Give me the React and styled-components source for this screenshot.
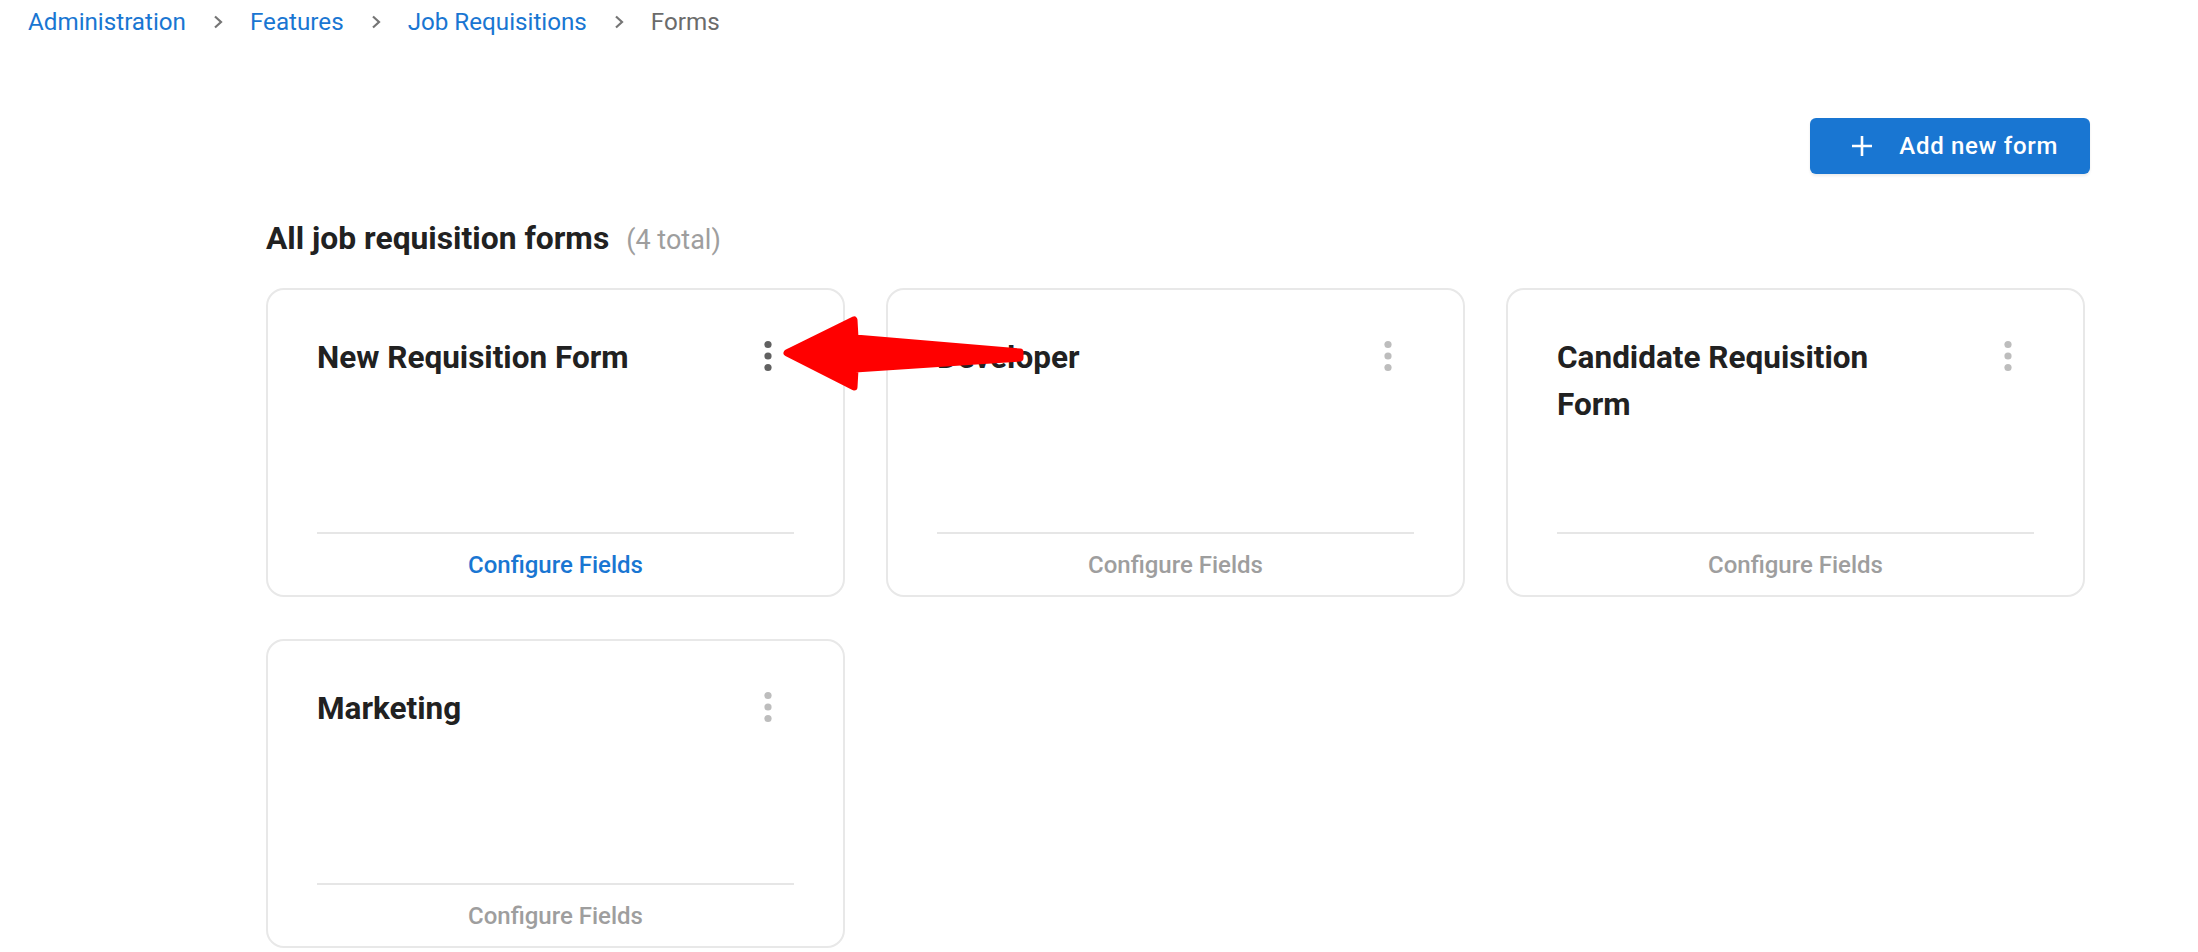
import React from "react";
import styled, { createGlobalStyle } from "styled-components";

const GlobalStyle = createGlobalStyle`
  html, body {
    margin: 0;
    padding: 0;
    background: #ffffff;
  }
  body {
    font-family: Roboto, "Liberation Sans", Arial, sans-serif;
    color: #212121;
  }
`;

const forms = [
  { id: 1, name: "New Requisition Form", active: true },
  { id: 2, name: "Developer" },
  { id: 3, name: "Candidate Requisition Form" },
  { id: 4, name: "Marketing" },
];

const crumbs = ["Administration", "Features", "Job Requisitions"];

function App() {
  return (
    <Page>
      <GlobalStyle />
      <Breadcrumbs>
        {crumbs.map((c) => (
          <React.Fragment key={c}>
            <CrumbLink>{c}</CrumbLink>
            <Separator>
              <svg width="12" height="14" viewBox="0 0 12 14">
                <path d="M3 1.5 L9 7 L3 12.5" fill="none" stroke="#757575" strokeWidth="2.2" />
              </svg>
            </Separator>
          </React.Fragment>
        ))}
        <CrumbCurrent>Forms</CrumbCurrent>
      </Breadcrumbs>

      <Main>
        <Toolbar>
          <AddButton>
            <svg width="20" height="20" viewBox="0 0 20 20">
              <path d="M10 0 V20 M0 10 H20" stroke="#fff" strokeWidth="2.6" />
            </svg>
            Add new form
          </AddButton>
        </Toolbar>

        <SectionTitle>
          All job requisition forms
          <Count>(4 total)</Count>
        </SectionTitle>

        <Grid>
          {forms.map((f) => (
            <Card key={f.id}>
              <CardHead>
                <CardTitle>{f.name}</CardTitle>
                <Kebab $active={f.active}>
                  <svg width="10" height="32" viewBox="0 0 10 32">
                    <circle cx="5" cy="4.5" r="3.6" />
                    <circle cx="5" cy="16" r="3.6" />
                    <circle cx="5" cy="27.5" r="3.6" />
                  </svg>
                </Kebab>
              </CardHead>
              <CardFooter $active={f.active}>Configure Fields</CardFooter>
            </Card>
          ))}
        </Grid>
      </Main>

      {/* red annotation arrow pointing at the first card's menu */}
      <Annotation width="2198" height="952" viewBox="0 0 2198 952">
        <polygon
          points="787,353 854,320 855,338 1020,352 1020,358 855,369 854,387"
          fill="#ff0000"
          stroke="#ff0000"
          strokeWidth="7"
          strokeLinejoin="round"
        />
      </Annotation>
    </Page>
  );
}

export default App;

const Page = styled.div`
  position: relative;
  width: 2198px;
  min-height: 952px;
  overflow: hidden;
`;

const Breadcrumbs = styled.nav`
  display: flex;
  align-items: center;
  height: 44px;
  padding-left: 28px;
  font-size: 24.2px;
  line-height: 1;
`;

const CrumbLink = styled.a`
  color: #1976d2;
  text-decoration: none;
  cursor: pointer;
`;

const CrumbCurrent = styled.span`
  color: #6b6b6b;
`;

const Separator = styled.span`
  display: flex;
  align-items: center;
  justify-content: center;
  width: 64px;
`;

const Main = styled.main`
  padding: 74px 108px 0 266px;
`;

const Toolbar = styled.div`
  display: flex;
  justify-content: flex-end;
`;

const AddButton = styled.button`
  display: flex;
  align-items: center;
  gap: 27px;
  height: 56px;
  padding: 0 32px 0 42px;
  border: none;
  border-radius: 6px;
  background: #1976d2;
  color: #ffffff;
  font-family: Roboto, "Liberation Sans", Arial, sans-serif;
  font-size: 24px;
  font-weight: 500;
  letter-spacing: 0.02857em;
  cursor: pointer;
  box-shadow: 0 2px 3px rgba(0, 0, 0, 0.08);
`;

const SectionTitle = styled.h2`
  display: flex;
  align-items: baseline;
  margin: 42px 0 26px;
  font-size: 31.8px;
  line-height: 44px;
  font-weight: 700;
  color: #212121;
`;

const Count = styled.span`
  margin-left: 17px;
  font-size: 27px;
  font-weight: 400;
  color: #9e9e9e;
`;

const Grid = styled.div`
  display: grid;
  grid-template-columns: repeat(3, 579px);
  column-gap: 41px;
  row-gap: 42px;
`;

const Card = styled.div`
  display: flex;
  flex-direction: column;
  height: 309px;
  box-sizing: border-box;
  padding: 44px 49px 0;
  border: 2px solid #e8e8e8;
  border-radius: 18px;
  background: #ffffff;
`;

const CardHead = styled.div`
  flex: 1;
  display: flex;
  justify-content: space-between;
  align-items: flex-start;
`;

const CardTitle = styled.h3`
  margin: 0;
  max-width: 350px;
  font-size: 31.5px;
  line-height: 47px;
  font-weight: 700;
  color: #212121;
`;

const Kebab = styled.button`
  display: flex;
  align-items: center;
  justify-content: center;
  flex-shrink: 0;
  width: 52px;
  height: 52px;
  margin-top: -4px;
  padding: 0;
  border: none;
  background: transparent;
  cursor: pointer;
  fill: ${(p) => (p.$active ? "#616161" : "#bdbdbd")};
`;

const CardFooter = styled.div`
  border-top: 2px solid #e6e6e6;
  padding: 13px 0 12px;
  text-align: center;
  font-size: 24px;
  line-height: 36px;
  font-weight: 500;
  color: ${(p) => (p.$active ? "#1976d2" : "#9e9e9e")};
  cursor: pointer;
`;

const Annotation = styled.svg`
  position: absolute;
  top: 0;
  left: 0;
  pointer-events: none;
`;
